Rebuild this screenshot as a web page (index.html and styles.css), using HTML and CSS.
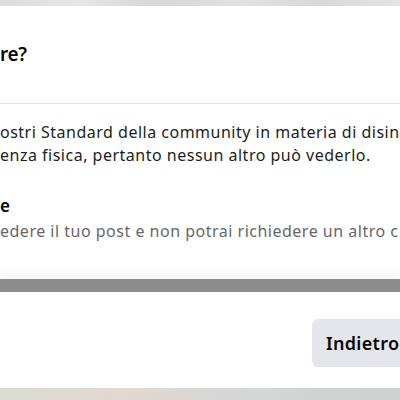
FILE: index.html
```html
<!DOCTYPE html>
<html lang="it">
<head>
    <meta charset="UTF-8">
    <meta name="viewport" content="width=device-width, initial-scale=1.0">
    <title>Post rimosso</title>
    <link rel="stylesheet" href="styles.css">
</head>
<body>
    <div class="backdrop backdrop-top"></div>
    <div class="dialog">
        <div class="dialog-header">
            <h2 class="title">re?</h2>
        </div>
        <div class="dialog-body">
            <p class="line">ostri Standard della community in materia di disin</p>
            <p class="line">enza fisica, pertanto nessun altro può vederlo.</p>
            <h3 class="subtitle">e</h3>
            <p class="line muted">edere il tuo post e non potrai richiedere un altro c</p>
        </div>
        <div class="scrollbar"></div>
        <div class="dialog-footer">
            <button type="button" class="btn">Indietro</button>
        </div>
    </div>
    <div class="backdrop backdrop-bottom"></div>
</body>
</html>
```

FILE: styles.css
```css
body {
    margin: 0;
    width: 400px;
    height: 400px;
    overflow: hidden;
    background: #d3d4d6;
    font-family: "Noto Sans", "Open Sans", Arial, sans-serif;
    color: #1c1e21;
}
.backdrop {
    background: linear-gradient(90deg, #dcdcdc 0%, #e6e6e6 20%, #d6d6d6 40%, #e2e2e2 60%, #d8d8d8 80%, #e4e4e4 100%);
}
.backdrop-top {
    height: 6px;
}
.backdrop-bottom {
    height: 12px;
    background: linear-gradient(90deg, #d9dcd4 0%, #e1d8cf 30%, #d5d6d8 60%, #cfd0d2 100%);
}
.dialog {
    background: #fff;
    height: 382px;
    display: flex;
    flex-direction: column;
}
.dialog-header {
    height: 98px;
    border-bottom: 1px solid #e4e6eb;
    box-sizing: border-box;
    padding-top: 36px;
}
.title {
    margin: 0;
    font-size: 19px;
    line-height: 24px;
    font-weight: 600;
    letter-spacing: -0.4px;
    color: #050505;
}
.dialog-body {
    padding-top: 17px;
}
.line {
    margin: 0;
    font-size: 16px;
    line-height: 23px;
    letter-spacing: 0.5px;
    white-space: nowrap;
    overflow: hidden;
}
.muted {
    color: #65676b;
}
.subtitle {
    margin: 27px 0 3px;
    font-size: 17px;
    line-height: 23px;
    font-weight: 600;
    color: #050505;
}
.scrollbar {
    margin-top: 36px;
    height: 13px;
    background: #8c8d8f;
    box-shadow: 0 -6px 8px rgba(0,0,0,0.04);
}
.dialog-footer {
    padding: 27px 0 0 312px;
}
.btn {
    width: 88px;
    height: 48px;
    border: none;
    border-radius: 6px 0 0 6px;
    background: #e4e6eb;
    color: #050505;
    font-family: inherit;
    font-size: 18px;
    font-weight: 600;
    letter-spacing: 0.3px;
    text-align: left;
    white-space: nowrap;
    overflow: hidden;
    padding: 0 0 0 14px;
}
```
